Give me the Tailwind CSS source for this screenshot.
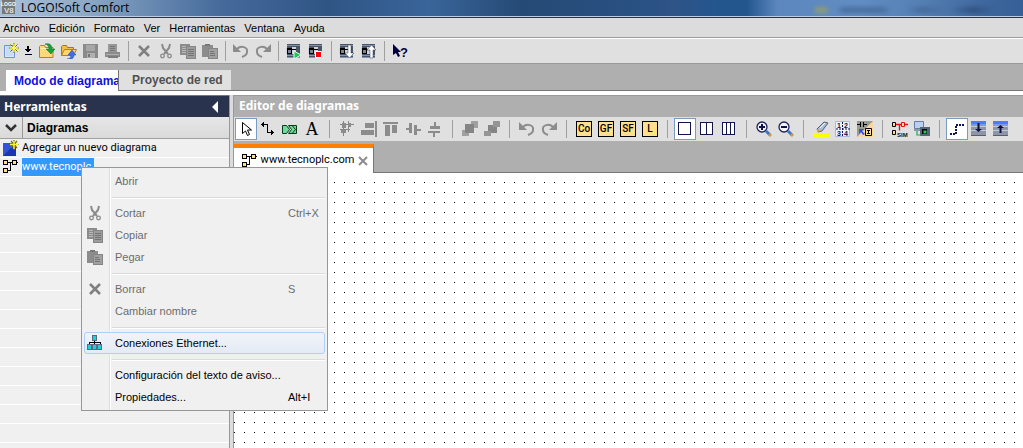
<!DOCTYPE html>
<html lang="es">
<head>
<meta charset="utf-8">
<title>LOGO!Soft Comfort</title>
<script src="https://cdn.jsdelivr.net/npm/@tailwindcss/browser@4"></script>
</head>
<body class="h-screen overflow-hidden bg-[#e0e0e0] font-['Liberation_Sans',sans-serif] text-[11px] text-black">
<svg class="hidden" aria-hidden="true">
  <defs>
    <symbol id="cut" viewBox="0 0 16 16"><path d="M4 1l1 4 5 6M12 1l-1 4-5 6" fill="none" stroke="#8a8a8a" stroke-width="2"/><circle cx="4.500" cy="13" r="1.800" fill="none" stroke="#8a8a8a" stroke-width="1.300"/><circle cx="11.500" cy="13" r="1.800" fill="none" stroke="#8a8a8a" stroke-width="1.300"/></symbol>
    <symbol id="copy" viewBox="0 0 16 16" shape-rendering="crispEdges"><path d="M0 1h10v11H0z" fill="#8c8c8c"/><path d="M2 3h5M2 5h4M2 7h4M2 9h4" transform="translate(0 .5)" stroke="#b8b8b8"/><path d="M6 3h9v12H6z" fill="#9c9c9c" stroke="#858585"/><path d="M8 6h6M8 8h6M8 10h6M8 12h6" transform="translate(0 .5)" stroke="#747474"/></symbol>
    <symbol id="paste" viewBox="0 0 16 16" shape-rendering="crispEdges"><path d="M0 2h11v12H0z" fill="#8c8c8c"/><path d="M3 1h5v2H3z" fill="#777"/><path d="M6 5h9v10H6z" fill="#a0a0a0" stroke="#858585"/><path d="M8 8h4M8 10h5M8 12h5" transform="translate(0 .5)" stroke="#747474"/></symbol>
    <symbol id="del" viewBox="0 0 16 16"><path d="M3 3l10 10M13 3L3 13" fill="none" stroke="#808080" stroke-width="2.600"/></symbol>
    <symbol id="undo" viewBox="0 0 16 16"><path d="M0 1v8h8z" fill="#8c8c8c"/><path d="M4 6c4-4 11-2 10 3 0 2-2 4-5 5" fill="none" stroke="#8c8c8c" stroke-width="2"/></symbol>
    <symbol id="redo" viewBox="0 0 16 16"><path d="M16 1v8H8z" fill="#8c8c8c"/><path d="M12 6C8 2 1 4 2 9c0 2 2 4 5 5" fill="none" stroke="#8c8c8c" stroke-width="2"/></symbol>
    <symbol id="diagram" viewBox="0 0 16 16" shape-rendering="crispEdges"><path d="M4 3h11v1H4zM7 4h1v8H4v-1h3z"/><path d="M0 1h5v5H0zM0 9h5v5H0zM9 1h5v5H9z"/><path d="M1 2h3v3H1zM1 10h3v3H1zM10 2h3v3h-3z" fill="#ffdf8c"/></symbol>
    <symbol id="plc" viewBox="0 0 16 16" shape-rendering="crispEdges"><path d="M1 1h13v14H1z" fill="#4c5566"/><path d="M1 2h13v1H1z" fill="#8290a6"/><path d="M1 12h13v1H1zM1 14h13v1H1z" fill="#8496b8"/><path d="M0 5h6v-1h4v7H0z" fill="#d0d4da"/><path d="M1 5h5v6H1zM6 6h4v1H6z" fill="#000"/><path d="M2 7h3v3H2z" fill="#7c8698"/></symbol>
    <symbol id="stack" viewBox="0 0 16 16" shape-rendering="crispEdges"><path d="M0 0h15v4H0z" fill="#4f7cf4"/><path d="M0 3h15v2H0z" fill="#7b9be8"/><path d="M0 5h15v9H0z" fill="#8c96a8"/><path d="M0 5.500h15M0 9.500h15" stroke="#c4cad4"/><path d="M0 14.500h15" stroke="#58606e"/></symbol>
  </defs>
</svg>

<div class="flex h-full flex-col">
  <header class="relative flex h-[18px] shrink-0 items-start border-b border-[#26344e] bg-[linear-gradient(90deg,#a9bfd8_0%,#8fabc9_8%,#6687b0_15%,#44699a_22%,#2f5585_32%,#3a659a_42%,#254a75_51%,#284f80_60%,#2e5488_66%,#24568e_70%,#24568e_73%,#5b87be_76%,#628dc3_84%,#5580b4_90%,#3f689f_96%,#355f96_100%)]">
    <svg class="h-[15px] w-4 shrink-0" viewBox="0 0 16 15" aria-hidden="true"><path d="M2 0h13v14H2z" fill="#787878"/><text x="1" y="6" font-size="5" font-weight="700" fill="#fff" font-family="Liberation Sans">LOGO</text><text x="4" y="13" font-size="8" font-weight="700" fill="#ddd" font-family="Liberation Sans">V8</text></svg>
    <h1 class="ml-[5px] font-['Open_Sans',sans-serif] text-xs leading-4">LOGO!Soft Comfort</h1>
    <div class="absolute right-[28px] bottom-1 h-1.5 w-[180px] bg-[linear-gradient(90deg,#8c9b78_0_6%,transparent_8%_12%,#496f9f_16%_38%,transparent_42%_50%,#46699a_60%,transparent_75%,#2f517d_88%,transparent)] blur-[2px]"></div>
    <div class="absolute bottom-0 left-0 h-px w-full bg-[#c0ccdb]"></div>
  </header>

  <nav aria-label="Menú principal" class="flex h-5 shrink-0 items-center gap-[9px] border-b border-[#9c9c9c] bg-[#dcdcdc] pl-[3px] leading-[14px]">
    <button>Archivo</button><button>Edición</button><button>Formato</button><button>Ver</button><button>Herramientas</button><button>Ventana</button><button>Ayuda</button>
  </nav>

  <div role="toolbar" aria-label="Estándar" class="flex h-[26px] shrink-0 items-center border-t border-b border-t-white border-b-[#999] bg-[#e0e0e0] [&>button]:flex [&>button]:h-[22px] [&>button]:w-[22px] [&>button]:items-center [&>button]:justify-center [&>i]:mx-1 [&>i]:h-5 [&>i]:w-px [&>i]:bg-[#a0a0a0] [&_svg]:h-4 [&_svg]:w-4">
    <button aria-label="Nuevo"><svg viewBox="0 0 16 16"><path d="M1.500 2.500h10v12h-10z" fill="#dce8fb" stroke="#6d93d1"/><path d="M3 4h7M3 6h7M3 8h7M3 10h7M3 12h7" stroke="#b4cdf3"/><path d="M11 0v10M6 5h10M7.500 1.500l7 7M14.500 1.500l-7 7" stroke="#6e7300" stroke-width="1"/><path d="M11 1v8M7 5h8" stroke="#f8ee2c" stroke-width="1.500"/><circle cx="11" cy="5" r="2" fill="#fff56a"/></svg></button>
    <button aria-label="Opciones de nuevo" class="!w-3.5"><svg viewBox="0 0 16 16" shape-rendering="crispEdges"><path d="M6 2h2v4h3l-4 4-4-4h3zM3 11h8v2H3z"/></svg></button>
    <button aria-label="Abrir"><svg viewBox="0 0 16 16"><path d="M.5 14.500v-11l1-1h4l1 2h7.500v10z" fill="#fbd978" stroke="#b78020"/><path d="M1.500 5.500h12" stroke="#fff0b8"/><path d="M6 1c5-1 7 1 7 5h3l-4 5-5-5h3c0-3-1-4-4-5z" fill="#14a03c" stroke="#087028" stroke-width=".5"/></svg></button>
    <button aria-label="Cargar"><svg viewBox="0 0 16 16"><path d="M.5 12.500v-9l1-1h4l1 2h6v8z" fill="#f1c04c" stroke="#a97616"/><path d="M.5 12.500l3-6h12l-3 6z" fill="#fcd56c" stroke="#b78020"/><path d="M6 16c3 0 4-2 4-4H7l4-5 4 5h-2c0 3-2 5-7 4z" fill="#3d6df2" stroke="#2348b8" stroke-width=".5"/></svg></button>
    <button aria-label="Guardar"><svg viewBox="0 0 16 16" shape-rendering="crispEdges"><path d="M0 1h15v14H0z" fill="#8a8a8a"/><path d="M3 2h9v6H3z" fill="#a6a6a6"/><path d="M4 10h8v5H4z" fill="#b0b0b0"/><path d="M5 11h2v3H5z" fill="#777"/></svg></button>
    <button aria-label="Imprimir"><svg viewBox="0 0 16 16" shape-rendering="crispEdges"><path d="M3 1h9v8H3z" fill="#989898"/><path d="M5 3h5M5 5h5M5 7h5" transform="translate(0 .5)" stroke="#777"/><path d="M0 9h15v5H0z" fill="#8a8a8a"/><path d="M1 11.500h13" stroke="#b0b0b0"/><path d="M3 13h10v2H3z" fill="#7c7c7c"/></svg></button>
    <i></i>
    <button aria-label="Borrar"><svg><use href="#del"/></svg></button>
    <button aria-label="Cortar"><svg><use href="#cut"/></svg></button>
    <button aria-label="Copiar"><svg><use href="#copy"/></svg></button>
    <button aria-label="Pegar"><svg><use href="#paste"/></svg></button>
    <i></i>
    <button aria-label="Deshacer"><svg><use href="#undo"/></svg></button>
    <button aria-label="Rehacer"><svg><use href="#redo"/></svg></button>
    <i></i>
    <button aria-label="Arrancar"><svg viewBox="0 0 16 16"><use href="#plc"/><path d="M8 8l7 4-7 4z" fill="#18c850" stroke="#e8fff0"/></svg></button>
    <button aria-label="Parar"><svg viewBox="0 0 16 16"><use href="#plc"/><path d="M7.500 8.500h6v6h-6z" fill="#f00" stroke="#fff"/></svg></button>
    <i></i>
    <button aria-label="Transferir a LOGO!"><svg viewBox="0 0 16 16"><use href="#plc"/><path d="M9 2h3v8h3l-4.500 5L6 10h3z" fill="#fff" stroke="#36405a" stroke-width=".5"/></svg></button>
    <button aria-label="Transferir al PC"><svg viewBox="0 0 16 16"><use href="#plc"/><path d="M9 15h3V7h3l-4.500-5L6 7h3z" fill="#fff" stroke="#36405a" stroke-width=".5"/></svg></button>
    <i></i>
    <button aria-label="Ayuda contextual"><svg viewBox="0 0 16 16"><path d="M1 1v11l3-2 2 4 2-1-2-4h3z" fill="#00003c"/><text x="8" y="14" font-size="13" font-weight="700" fill="#00003c" font-family="Liberation Sans">?</text></svg></button>
  </div>

  <div role="tablist" class="relative flex h-[27px] shrink-0 items-end bg-[#afafaf] pl-1.5 text-xs font-bold">
    <div class="absolute right-0 bottom-0 left-[118px] h-px bg-[#77777a]"></div>
    <button role="tab" aria-selected="true" class="h-[21px] w-[113px] overflow-hidden border-r border-[#777] bg-white pl-2 text-left leading-5 whitespace-nowrap text-[#1010e0]">Modo de diagrama</button>
    <button role="tab" aria-selected="false" class="mb-px h-5 w-28 bg-[#e0e0e0] pl-[13px] text-left leading-5 whitespace-nowrap text-[#505050]">Proyecto de red</button>
  </div>
  <div class="h-1 shrink-0 bg-white"></div>

  <main class="flex min-h-0 flex-1">
    <aside class="flex w-[229px] shrink-0 flex-col bg-[#f0f0f0]">
      <div class="flex h-[22px] shrink-0 items-center justify-between border-t border-[#777] bg-[#2a334e] pr-2.5 pl-1">
        <h2 class="font-['Noto_Sans',sans-serif] text-xs leading-5 font-bold text-white">Herramientas</h2>
        <button aria-label="Contraer"><svg class="h-3 w-2" viewBox="0 0 8 12"><path d="M7 0v12L1 6z" fill="#fff"/></svg></button>
      </div>
      <div class="flex h-[22px] shrink-0 items-stretch border-b border-[#a0a0a0] bg-[linear-gradient(180deg,#e6e6e6,#dadada)]">
        <button aria-label="Plegar diagramas" class="flex w-[23px] items-center justify-center border-r border-[#999]"><svg class="h-3 w-3" viewBox="0 0 12 12"><path d="M1 3l5 5 5-5" fill="none" stroke="#333" stroke-width="2.500"/></svg></button>
        <h3 class="pl-1 text-xs leading-[22px] font-bold">Diagramas</h3>
      </div>
      <div class="min-h-0 flex-1 overflow-hidden bg-[repeating-linear-gradient(180deg,#f0f0f0_0_18px,#ffffff_18px_19px)] font-['Roboto',sans-serif]">
        <button class="flex h-[19px] w-full items-center gap-[3px] pb-px pl-[3px]"><svg class="h-4 w-4" viewBox="0 0 16 16"><path d="M0 3h13v13H0z" fill="#3454d8"/><path d="M0 16L13 3v13z" fill="#1c35b0"/><path d="M11 0v10M6.500 4.500h9M8 1l6 7M14 1L8 8" stroke="#6e7300" stroke-width="1.200"/><path d="M11 1v8M7 4.500h8" stroke="#fff02c" stroke-width="1.500"/></svg><span class="whitespace-nowrap">Agregar un nuevo diagrama</span></button>
        <button class="flex h-[19px] w-full items-center gap-[3px] pb-px pl-[3px]"><svg class="h-4 w-4"><use href="#diagram"/></svg><span class="h-[18px] w-[72px] bg-[#3399ff] text-left leading-[18px] text-white">www.tecnoplc</span></button>
      </div>
    </aside>
    <div class="w-[5px] shrink-0 border-x border-[#999] bg-[#dcdcdc]"></div>

    <section class="flex min-w-0 flex-1 flex-col">
      <h2 class="h-[22px] shrink-0 border-t border-[#999] bg-[#afafaf] pl-[5px] font-['Noto_Sans',sans-serif] text-xs leading-5 font-bold text-white">Editor de diagramas</h2>
      <div role="toolbar" aria-label="Editor" class="flex h-6 shrink-0 items-center bg-[#e0e0e0] pl-px [&>button]:flex [&>button]:h-[22px] [&>button]:w-[22px] [&>button]:shrink-0 [&>button]:items-center [&>button]:justify-center [&>i]:mx-1.5 [&>i]:h-[18px] [&>i]:w-px [&>i]:shrink-0 [&>i]:bg-[#a0a0a0] [&_svg]:h-4 [&_svg]:w-4">
        <button aria-label="Selección" class="border border-[#7a9cbf] bg-white"><svg viewBox="0 0 16 16"><path d="M4.500 1.500v11l3-2.500 2 4.500 2-1-2-4.500h4z" fill="#fff" stroke="#000"/></svg></button>
        <button aria-label="Conectar"><svg viewBox="0 0 16 16" shape-rendering="crispEdges"><path d="M2 3h6v8h5v1H7V4H2z"/><path d="M1 3h1v1H1zM2 2h1v3H2zM3 1h1v5H3zM11 9h1v5h-1zM12 10h1v3h-1zM13 11h1v1h-1z"/></svg></button>
        <button aria-label="Bloques"><svg viewBox="0 0 16 16"><path d="M.5 4.500h4l3 4-3 4h-4zM6.500 4.500h8v8h-8l3-4z" fill="#6edc98" stroke="#083c18"/><path d="M10.500 5l3 3.500-3 3.500" fill="none" stroke="#083c18"/></svg></button>
        <button aria-label="Texto"><span class="font-['Liberation_Serif',serif] text-lg leading-none">A</span></button>
        <i></i>
        <button aria-label="Alinear"><svg viewBox="0 0 16 16" shape-rendering="crispEdges"><path d="M4.500 0v15M9.500 0v11M1 3.500h14M1 8.500h10" stroke="#858585"/><path d="M3 2h4v5H3zM9 2h3v4H9zM2 9h5v3H2z" fill="#8c8c8c"/></svg></button>
        <button aria-label="Alinear a la derecha"><svg viewBox="0 0 16 16" shape-rendering="crispEdges"><path d="M4 2h9v5H4zM0 9h13v5H0zM14 0h2v16h-2z" fill="#8c8c8c"/></svg></button>
        <button aria-label="Alinear arriba"><svg viewBox="0 0 16 16" shape-rendering="crispEdges"><path d="M0 1h15v2H0zM2 4h5v11H2zM9 4h5v8H9z" fill="#8c8c8c"/></svg></button>
        <button aria-label="Centrar horizontal"><svg viewBox="0 0 16 16" shape-rendering="crispEdges"><path d="M1 7h5v2H1zM4 2h3v10H4zM9 4h3v10H9zM11 8h5v2h-5z" fill="#8c8c8c"/></svg></button>
        <button aria-label="Centrar vertical"><svg viewBox="0 0 16 16" shape-rendering="crispEdges"><path d="M7 1h2v5H7zM3 5h10v3H3zM1 10h12v2H1zM6 12h2v4H6z" fill="#8c8c8c"/></svg></button>
        <i></i>
        <button aria-label="Traer al frente"><svg viewBox="0 0 16 16" shape-rendering="crispEdges"><path d="M9 0h7v7H9zM0 9h7v6H0z" fill="#a0a0a0"/><path d="M3 3h9v9H3z" fill="#858585"/></svg></button>
        <button aria-label="Enviar al fondo"><svg viewBox="0 0 16 16" shape-rendering="crispEdges"><path d="M4 4h9v8H4z" fill="#858585"/><path d="M9 0h7v6H9zM0 10h7v5H0z" fill="#959595"/></svg></button>
        <i></i>
        <button aria-label="Deshacer"><svg><use href="#undo"/></svg></button>
        <button aria-label="Rehacer"><svg><use href="#redo"/></svg></button>
        <i></i>
        <button><span class="h-4 w-4 border border-black bg-[#ffdf8c] text-center font-['Roboto',sans-serif] text-[10px] leading-[14px] font-medium">Co</span></button>
        <button><span class="h-4 w-4 border border-black bg-[#ffdf8c] text-center font-['Roboto',sans-serif] text-[10px] leading-[14px] font-medium">GF</span></button>
        <button><span class="h-4 w-4 border border-black bg-[#ffdf8c] text-center font-['Roboto',sans-serif] text-[10px] leading-[14px] font-medium">SF</span></button>
        <button><span class="h-4 w-4 border border-black bg-[#ffdf8c] text-center font-['Roboto',sans-serif] text-[10px] leading-[14px] font-medium">L</span></button>
        <i></i>
        <button aria-label="Una ventana" class="border border-[#7a9cbf] bg-white"><svg viewBox="0 0 16 16" shape-rendering="crispEdges"><path d="M1.500 1.500h12v12h-12z" fill="#fff" stroke="#14144c"/></svg></button>
        <button aria-label="Dos ventanas"><svg viewBox="0 0 16 16" shape-rendering="crispEdges"><path d="M1.500 1.500h12v12h-12zM7.500 1.500v12" fill="#fff" stroke="#14144c"/></svg></button>
        <button aria-label="Tres ventanas"><svg viewBox="0 0 16 16" shape-rendering="crispEdges"><path d="M1.500 1.500h12v12h-12zM5.500 1.500v12M9.500 1.500v12" fill="#fff" stroke="#14144c"/></svg></button>
        <i></i>
        <button aria-label="Ampliar"><svg viewBox="0 0 16 16"><path d="M10 10l4 4" stroke="#3a78c8" stroke-width="3"/><path d="M13 13l2 2" stroke="#d89a30" stroke-width="3"/><circle cx="6" cy="6" r="5" fill="#f2f4ff" stroke="#20205c" stroke-width="1.300"/><path d="M3 6h6M6 3v6" stroke="#10104c" stroke-width="2"/></svg></button>
        <button aria-label="Reducir"><svg viewBox="0 0 16 16"><path d="M10 10l4 4" stroke="#3a78c8" stroke-width="3"/><path d="M13 13l2 2" stroke="#d89a30" stroke-width="3"/><circle cx="6" cy="6" r="5" fill="#f2f4ff" stroke="#20205c" stroke-width="1.300"/><path d="M3 6h6" stroke="#10104c" stroke-width="2"/></svg></button>
        <i></i>
        <button aria-label="Resaltar"><svg viewBox="0 0 16 16"><path d="M0 12h16v4H0z" fill="#ff0"/><path d="M4 8l7-7 4 1-6 8-4 1z" fill="#a9bdd6" stroke="#4f5f7a"/><path d="M4 8l4 2-4 1z" fill="#e8a040"/><path d="M7 7l5-5" stroke="#fff"/></svg></button>
        <button aria-label="División de páginas"><svg viewBox="0 0 16 16"><path d="M.5 .5h14v15H.5z" fill="#eef2ff" stroke="#a8b8e0"/><path d="M7.500 1v14M1 8h14" stroke="#10104c" stroke-dasharray="2 1"/><g font-size="7" font-weight="700" fill="#10104c" font-family="Liberation Sans"><text x="2" y="7">1</text><text x="9" y="7">2</text><text x="2" y="15">3</text><text x="9" y="15">4</text></g></svg></button>
        <button aria-label="Convertir"><svg viewBox="0 0 16 16"><path d="M0 0h16v16H0z" fill="#9a9a90"/><path d="M16 0v16H0z" fill="#f8d8a0"/><path d="M0 3.500h3M3.500 1v5M6.500 1v5M7 3.500h3" stroke="#000"/><path d="M2 8h5l-2 2 3 3-2 1-2-3-2 2z" fill="#3050f0"/><path d="M8.500 7.500h6v7h-6z" fill="#ffdf8c" stroke="#000"/><path d="M10 9.500h3M11.500 9.500v3M10 12.500h3" stroke="#000"/></svg></button>
        <i></i>
        <button aria-label="Simulación"><svg viewBox="0 0 16 16"><path d="M4 3.500h12M7.500 3.500v6" stroke="#e01010" stroke-width="1.300"/><path d="M.5 1.500h3v4h-3zM.5 9.500h3v4h-3z" fill="#ffdf8c" stroke="#000"/><path d="M9.500 1.500h3v4h-3z" fill="#ffdf8c" stroke="#e01010"/><text x="5" y="16" font-size="6" font-weight="700" fill="#111" font-family="Liberation Sans">SIM</text></svg></button>
        <button aria-label="Prueba online"><svg viewBox="0 0 16 16"><path d="M.5 .5h9v7h-9z" fill="#b9d0f0" stroke="#6480a8"/><path d="M0 8h11v2H0z" fill="#8c98a8"/><path d="M6 6h10v9H6z" fill="#56637c"/><path d="M8 8h5v5H8z" fill="#000"/><path d="M9.500 9.500h3v3h-3z" fill="#10d060"/><path d="M3 10v4h4" fill="none" stroke="#12b050" stroke-width="1.200"/></svg></button>
        <i></i>
        <button aria-label="Líneas de conexión" class="border border-[#7a9cbf] bg-white"><svg viewBox="0 0 16 16"><path d="M1 13h6V4h9" fill="none" stroke="#14144c" stroke-width="2" stroke-dasharray="2 1"/></svg></button>
        <button aria-label="Bajar"><svg viewBox="0 0 16 16"><use href="#stack"/><path d="M6.500 2h2v6H11l-3.500 3L4 8h2.500z" fill="#101040"/></svg></button>
        <button aria-label="Subir"><svg viewBox="0 0 16 16"><use href="#stack"/><path d="M6.500 12h2V7H11L7.500 4 4 7h2.500z" fill="#101040"/></svg></button>
      </div>
      <div class="flex h-8 shrink-0 items-stretch bg-[#afafaf] pt-[3px]">
        <div class="flex w-[140px] shrink-0 items-center justify-between border-t-4 border-r border-t-[#ff8000] border-r-[#777] bg-white pr-1 pl-2 font-['Roboto',sans-serif]"><svg class="h-4 w-4 shrink-0"><use href="#diagram"/></svg><span>www.tecnoplc.com</span><button aria-label="Cerrar"><svg class="h-3 w-3" viewBox="0 0 12 12"><path d="M2 2l8 8M10 2l-8 8" stroke="#8c8c8c" stroke-width="2"/></svg></button></div>
        <div class="flex-1 border-b border-[#77777a]"></div>
      </div>
      <div class="min-h-0 flex-1 bg-white">
        <svg class="h-full w-full" aria-hidden="true"><defs><pattern id="grid" width="10" height="10" patternUnits="userSpaceOnUse"><rect x="0" y="9" width="1" height="1"/></pattern></defs><rect width="100%" height="100%" fill="url(#grid)"/></svg>
      </div>
    </section>
  </main>
</div>

<div role="menu" class="absolute top-[167px] left-[81px] w-[247px] border border-[#979797] bg-[#f0f0f0] bg-[linear-gradient(90deg,transparent_27px,#e0e0e0_27px_28px,#ffffff_28px_29px,transparent_29px)] p-0.5 text-[#6d6d6d] [&>button]:flex [&>button]:h-[22px] [&>button]:w-full [&>button]:items-center [&>button]:border [&>button]:border-transparent [&>button]:pr-1 [&>button]:pl-0.5 [&>button]:text-left [&>hr]:mt-[5px] [&>hr]:mb-[3px] [&>hr]:ml-7 [&>hr]:h-0.5 [&>hr]:border-t [&>hr]:border-[#dadada] [&>hr]:bg-white [&_i]:mr-3 [&_i]:h-4 [&_i]:w-4 [&_i]:shrink-0 [&_kbd]:w-8 [&_kbd]:font-['Liberation_Sans',sans-serif] [&_span]:flex-1 [&_svg]:h-4 [&_svg]:w-4">
  <button role="menuitem" disabled><i></i><span>Abrir</span></button>
  <hr>
  <button role="menuitem" disabled><i><svg><use href="#cut"/></svg></i><span>Cortar</span><kbd>Ctrl+X</kbd></button>
  <button role="menuitem" disabled><i><svg><use href="#copy"/></svg></i><span>Copiar</span></button>
  <button role="menuitem" disabled><i><svg><use href="#paste"/></svg></i><span>Pegar</span></button>
  <hr>
  <button role="menuitem" disabled><i><svg><use href="#del"/></svg></i><span>Borrar</span><kbd>S</kbd></button>
  <button role="menuitem" disabled><i></i><span>Cambiar nombre</span></button>
  <hr>
  <button role="menuitem" class="rounded-[3px] !border-[#aecff7] bg-[linear-gradient(180deg,#f0f3f9,#e4ebf6)] text-black"><i><svg viewBox="0 0 16 16" shape-rendering="crispEdges"><path d="M7 6h1v4H7zM2 7h12v1H2zM2 8h1v2H2zM13 8h1v2h-1z"/><path d="M5 0h5v6H5zM0 9h5v6H0zM5 9h5v6H5zM10 9h5v6h-5z" fill="#5c6880"/><path d="M6 1h3v4H6zM1 10h3v4H1zM6 10h3v4H6zM11 10h3v4h-3z" fill="#19d3d8"/></svg></i><span>Conexiones Ethernet...</span></button>
  <hr>
  <button role="menuitem" class="text-black"><i></i><span>Configuración del texto de aviso...</span></button>
  <button role="menuitem" class="text-black"><i></i><span>Propiedades...</span><kbd>Alt+I</kbd></button>
</div>
</body>
</html>
